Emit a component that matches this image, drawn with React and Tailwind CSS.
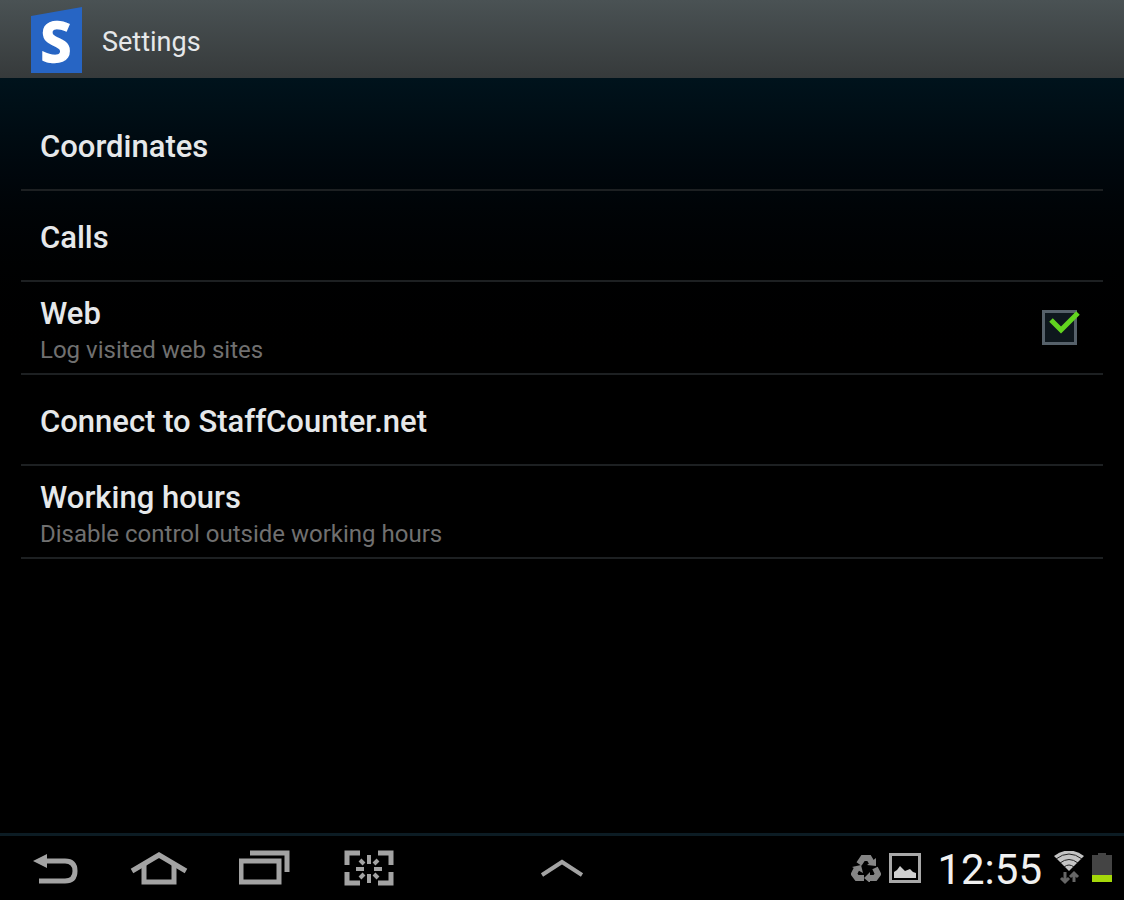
import { useState } from 'react';

const items = [
    { id: 'coordinates', title: 'Coordinates' },
    { id: 'calls', title: 'Calls' },
    { id: 'web', title: 'Web', summary: 'Log visited web sites', checkable: true },
    { id: 'connect', title: 'Connect to StaffCounter.net' },
    { id: 'hours', title: 'Working hours', summary: 'Disable control outside working hours' },
];

export default function App() {
    const [webLog, setWebLog] = useState(true);

    return (
        <div className="flex min-h-screen flex-col bg-black font-['Roboto','Liberation_Sans',sans-serif] text-[#e6e8ea]">
            <header className="flex h-[78px] items-end gap-5 bg-linear-to-b from-[#4a5254] to-[#363a3b] pb-1 pl-[31px]">
                <Logo />
                <h1 className="pb-3 text-[27px] leading-10">Settings</h1>
            </header>

            <main className="flex-1 bg-linear-to-b from-[#00131c] to-black to-[300px] px-[21px] pt-[22px]">
                <ul>
                    {items.map((item) => (
                        <li key={item.id} className="border-b-2 border-[#1d2022]">
                            {item.checkable ? (
                                <label className="flex items-center justify-between pr-[26px] pl-[19px]">
                                    <ItemText item={item} />
                                    <CheckBox checked={webLog} onChange={(e) => setWebLog(e.target.checked)} />
                                </label>
                            ) : (
                                <button type="button" className="flex w-full pl-[19px] text-left">
                                    <ItemText item={item} />
                                </button>
                            )}
                        </li>
                    ))}
                </ul>
            </main>

            <NavBar />
        </div>
    );
}

function ItemText({ item }) {
    if (!item.summary) {
        return (
            <span className="flex h-[89px] items-center pt-1 text-[31px] leading-9 font-medium">{item.title}</span>
        );
    }

    return (
        <span className="flex flex-col pt-[14px] pb-[5px] leading-9">
            <span className="text-[31px] font-medium">{item.title}</span>
            <span className="text-[24px] text-[#707070]">{item.summary}</span>
        </span>
    );
}

function CheckBox({ checked, onChange }) {
    return (
        <span className="relative block size-[35px]">
            <input
                type="checkbox"
                checked={checked}
                onChange={onChange}
                className="block size-[35px] appearance-none border-3 border-[#56616a] bg-[#0e171d]"
            />
            {checked && (
                <svg viewBox="0 0 40 36" className="pointer-events-none absolute top-0 left-0 h-9 w-10" fill="none">
                    <path d="M9 10 L19 20 L36 3" stroke="#62d51f" strokeWidth="5" />
                </svg>
            )}
        </span>
    );
}

function Logo() {
    return (
        <svg width="51" height="66" viewBox="0 0 51 66" className="overflow-visible" aria-hidden="true">
            <path d="M0 8 L51 -1 V65 H0 Z" fill="#2765c4" />
            <text
                x="25"
                y="54"
                textAnchor="middle"
                fill="#fff"
                stroke="#fff"
                strokeWidth="1.5"
                className="font-['Open_Sans',sans-serif] text-[56px] font-bold"
            >
                S
            </text>
        </svg>
    );
}

function NavBar() {
    return (
        <footer className="grid h-[67px] grid-cols-[1fr_auto_1fr] items-center border-t-3 border-[#0c1c24] bg-black text-[#a3a3a3]">
            <nav className="flex items-center gap-[51px] pl-[33px]">
                <button type="button" aria-label="Back">
                    <svg width="46" height="36" viewBox="0 0 46 36" fill="none">
                        <path d="M12 11 H32 C39 11 42 15 42 21 C42 27 39 31 32 31 H6" stroke="currentColor" strokeWidth="5" />
                        <path d="M0 11 L14 4 V18 Z" fill="currentColor" />
                    </svg>
                </button>
                <button type="button" aria-label="Home">
                    <svg width="58" height="36" viewBox="0 0 58 36" fill="none" stroke="currentColor" strokeWidth="5">
                        <path d="M2 21 L29 5 L56 21" />
                        <path d="M14 15 V32 H44 V15" />
                    </svg>
                </button>
                <button type="button" aria-label="Recent apps">
                    <svg width="52" height="36" viewBox="0 0 52 36" fill="none" stroke="currentColor" strokeWidth="5">
                        <path d="M2 11 H40 V32 H2 Z" />
                        <path d="M11 3 H48 V22" />
                    </svg>
                </button>
                <button type="button" aria-label="Screenshot">
                    <svg width="52" height="36" viewBox="0 0 52 36" fill="none" stroke="currentColor">
                        <path d="M5 15 V3 H18 M36 3 H49 V15 M49 22 V33 H36 M18 33 H5 V22" strokeWidth="5" />
                        <path
                            d="M27 5 V14 M27 24 V33 M14 19 H22 M32 19 H40 M18 10 L22 14 M36 10 L32 14 M18 28 L22 24 M36 28 L32 24"
                            strokeWidth="4"
                        />
                    </svg>
                </button>
            </nav>

            <button type="button" aria-label="Show mini apps">
                <svg width="44" height="36" viewBox="0 0 44 36" fill="none">
                    <path d="M2 25 L22 12 L42 25" stroke="currentColor" strokeWidth="4" />
                </svg>
            </button>

            <StatusArea />
        </footer>
    );
}

function StatusArea() {
    return (
        <div className="flex items-center justify-end pr-3">
            <svg width="30" height="28" viewBox="0 0 30 28" className="mr-2" fill="none" stroke="#858585" strokeWidth="6">
                <path d="M8 10 L12 4 H18 L21 9" />
                <path d="M24 14 L27 20 L24 24 H17" />
                <path d="M13 24 H6 L3 20 L6 14" />
                <path d="M16 11 L25 12 L25 4 Z M19 18 V29 L13 24 Z M1 13 L10 11 L12 19 Z" fill="#858585" stroke="none" />
            </svg>
            <svg width="32" height="30" viewBox="0 0 32 30" className="mr-4" fill="none">
                <path d="M1.5 1.5 H30.5 V28.5 H1.5 Z" stroke="#a8a8a8" strokeWidth="3" />
                <path d="M5 25 V19 L8 17 L11 13 L16 18 L21 16 L24 19 L27 20 V25 Z" fill="#d0d0d0" />
            </svg>
            <time className="mr-3 pt-1 text-[42px] leading-none text-[#f0f0f0]">12:55</time>
            <svg width="30" height="34" viewBox="0 0 30 34" className="mr-2" fill="none">
                <path d="M0 5 Q15 -6 30 5 L15 20 Z" fill="#c4c4c4" />
                <path d="M2 8 Q15 -2 28 8 M6 12 Q15 5 24 12 M10 16 Q15 12 20 16" stroke="#222" strokeWidth="1" />
                <path d="M11 21 V31 M7 27 L11 31 L15 27 M20 31 V22 M16 26 L20 22 L24 26" stroke="#666" strokeWidth="3" />
            </svg>
            <svg width="20" height="30" viewBox="0 0 20 30">
                <path d="M0 2 H6 V0 H14 V2 H20 V29 H0 Z" fill="#444" />
                <path d="M0 22 H20 V29 H0 Z" fill="#a5d80a" />
            </svg>
        </div>
    );
}
